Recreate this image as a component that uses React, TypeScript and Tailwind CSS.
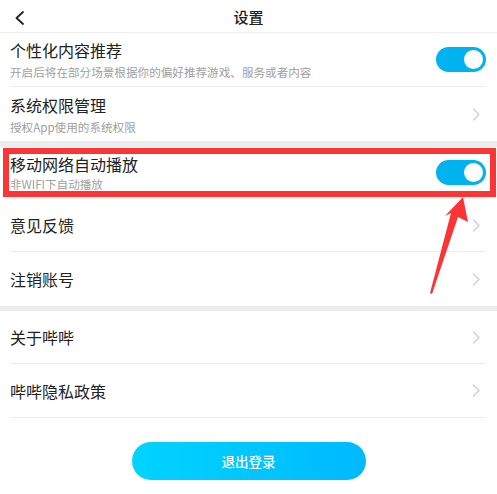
import React from "react";

const font = { fontFamily: '"Noto Sans CJK SC", "Noto Sans", sans-serif' };

function Chevron() {
  return (
    <svg width="9" height="13" viewBox="0 0 9 13" className="shrink-0">
      <path d="M1.5 1 L7 6.5 L1.5 12" fill="none" stroke="#ccd0dc" strokeWidth="1.4" strokeLinecap="round" strokeLinejoin="round" />
    </svg>
  );
}

function Toggle() {
  return (
    <div className="w-[50px] h-[25px] rounded-full bg-[#00b2f0] flex items-center justify-end pr-[3px] shrink-0">
      <div className="w-[19px] h-[19px] rounded-full bg-white" />
    </div>
  );
}

function TwoLine({ title, sub, right, divider, padTop }: { title: string; sub: string; right: React.ReactNode; divider: boolean; padTop: string }) {
  return (
    <div className={`ml-[10px] mr-[11px] h-[54px] flex items-center justify-between ${divider ? "border-b border-[#ececec]" : ""}`}>
      <div className={`flex flex-col ${padTop}`}>
        <div className="text-[16px] leading-[22px] text-[#222]">{title}</div>
        <div className="text-[11.6px] leading-[18px] text-[#a0a0a0] mt-[2px]">{sub}</div>
      </div>
      <div className="pr-[0px]">{right}</div>
    </div>
  );
}

function OneLine({ title, divider, h }: { title: string; divider: boolean; h: string }) {
  return (
    <div className={`ml-[10px] mr-[11px] ${h} flex items-center justify-between ${divider ? "border-b border-[#ececec]" : ""}`}>
      <div className="text-[16px] leading-[22px] text-[#222]">{title}</div>
      <div className="pr-[5px] flex items-center"><Chevron /></div>
    </div>
  );
}

export default function App() {
  return (
    <div className="relative w-[497px] h-[494px] bg-white overflow-hidden" style={font}>
      {/* header */}
      <div className="relative h-[33px] border-b border-[#eeeeee] flex items-center justify-center">
        <svg className="absolute left-[14px] top-[11px]" width="11" height="14" viewBox="0 0 11 14">
          <path d="M9 1 L2.5 7 L9 13" fill="none" stroke="#222" strokeWidth="1.8" strokeLinecap="round" strokeLinejoin="round" />
        </svg>
        <div className="text-[15px] font-medium text-[#222] leading-none">设置</div>
      </div>

      <TwoLine title="个性化内容推荐" sub="开启后将在部分场景根据你的偏好推荐游戏、服务或者内容" right={<Toggle />} divider padTop="pt-[0px]" />
      <TwoLine title="系统权限管理" sub="授权App使用的系统权限" right={<div className="pr-[5px] flex"><Chevron /></div>} divider={false} padTop="pt-[2px]" />
      <div className="h-[6px] bg-[#ececec]" />
      <div className="ml-[10px] mr-[11px] h-[52px] flex items-center justify-between border-b border-[#ececec]">
        <div className="flex flex-col">
          <div className="text-[16px] leading-[22px] text-[#222]">移动网络自动播放</div>
          <div className="text-[11.6px] leading-[18px] text-[#a0a0a0]">非WIFI下自动播放</div>
        </div>
        <Toggle />
      </div>
      <OneLine title="意见反馈" divider h="h-[53px]" />
      <OneLine title="注销账号" divider={false} h="h-[54px]" />
      <div className="h-[5px] bg-[#ececec]" />
      <OneLine title="关于哔哔" divider h="h-[53px]" />
      <OneLine title="哔哔隐私政策" divider h="h-[54px]" />

      <div className="flex justify-center pt-[24px]">
        <div className="w-[234px] h-[38px] rounded-full bg-gradient-to-r from-[#00d4ff] to-[#00b9ff] flex items-center justify-center text-white text-[13.5px] font-medium">
          退出登录
        </div>
      </div>

      {/* annotation */}
      <div className="absolute left-[3px] top-[148px] w-[493px] h-[49px] border-[6px] border-[#fb3535] pointer-events-none" />
      <svg className="absolute left-0 top-0 pointer-events-none" width="497" height="494" viewBox="0 0 497 494">
        <polygon points="463,197 468,222 458,217 432,294 430,293 451,213 445,216" fill="#fb3535" />
      </svg>
    </div>
  );
}
